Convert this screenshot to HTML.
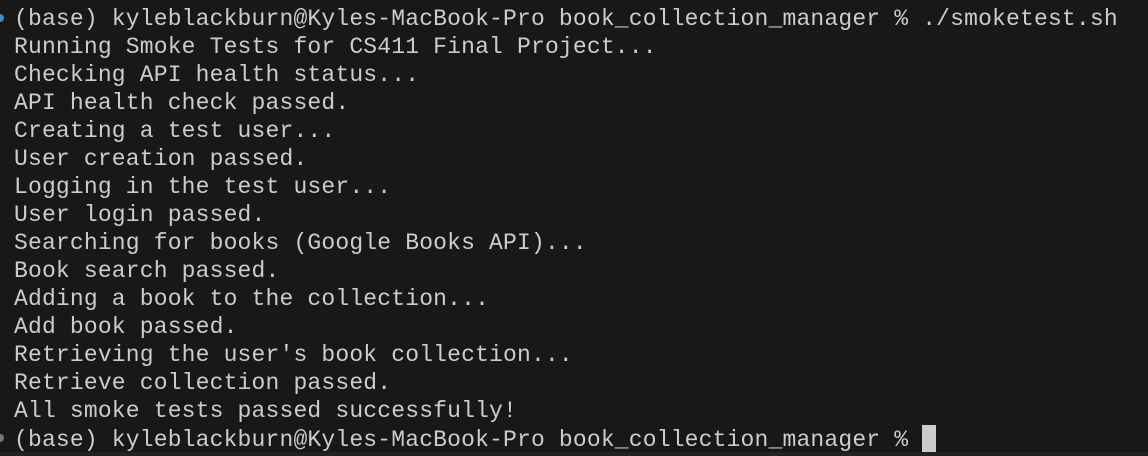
<!DOCTYPE html>
<html><head><meta charset="utf-8"><style>
html,body{margin:0;padding:0;}
body{width:1148px;height:456px;background:#181818;overflow:hidden;position:relative;}
pre{position:absolute;left:14px;top:5px;margin:0;font-family:"Liberation Mono",monospace;font-size:23px;letter-spacing:0.17px;line-height:28px;color:#cccccc;}
.cur{display:inline-block;width:14px;height:27px;background:#cccccc;vertical-align:-6px;}
.dot{position:absolute;left:-4px;width:8px;height:8px;border-radius:50%;}
.bot{position:absolute;left:0;right:0;top:452px;height:4px;background:#222;}
</style></head><body>
<div class="dot" style="top:14px;background:#3b8fd1"></div>
<div class="dot" style="top:434px;background:#777"></div>
<pre>(base) kyleblackburn@Kyles-MacBook-Pro book_collection_manager % ./smoketest.sh
Running Smoke Tests for CS411 Final Project...
Checking API health status...
API health check passed.
Creating a test user...
User creation passed.
Logging in the test user...
User login passed.
Searching for books (Google Books API)...
Book search passed.
Adding a book to the collection...
Add book passed.
Retrieving the user's book collection...
Retrieve collection passed.
All smoke tests passed successfully!
(base) kyleblackburn@Kyles-MacBook-Pro book_collection_manager % <span class="cur"></span></pre>
<div class="bot"></div>
</body></html>
